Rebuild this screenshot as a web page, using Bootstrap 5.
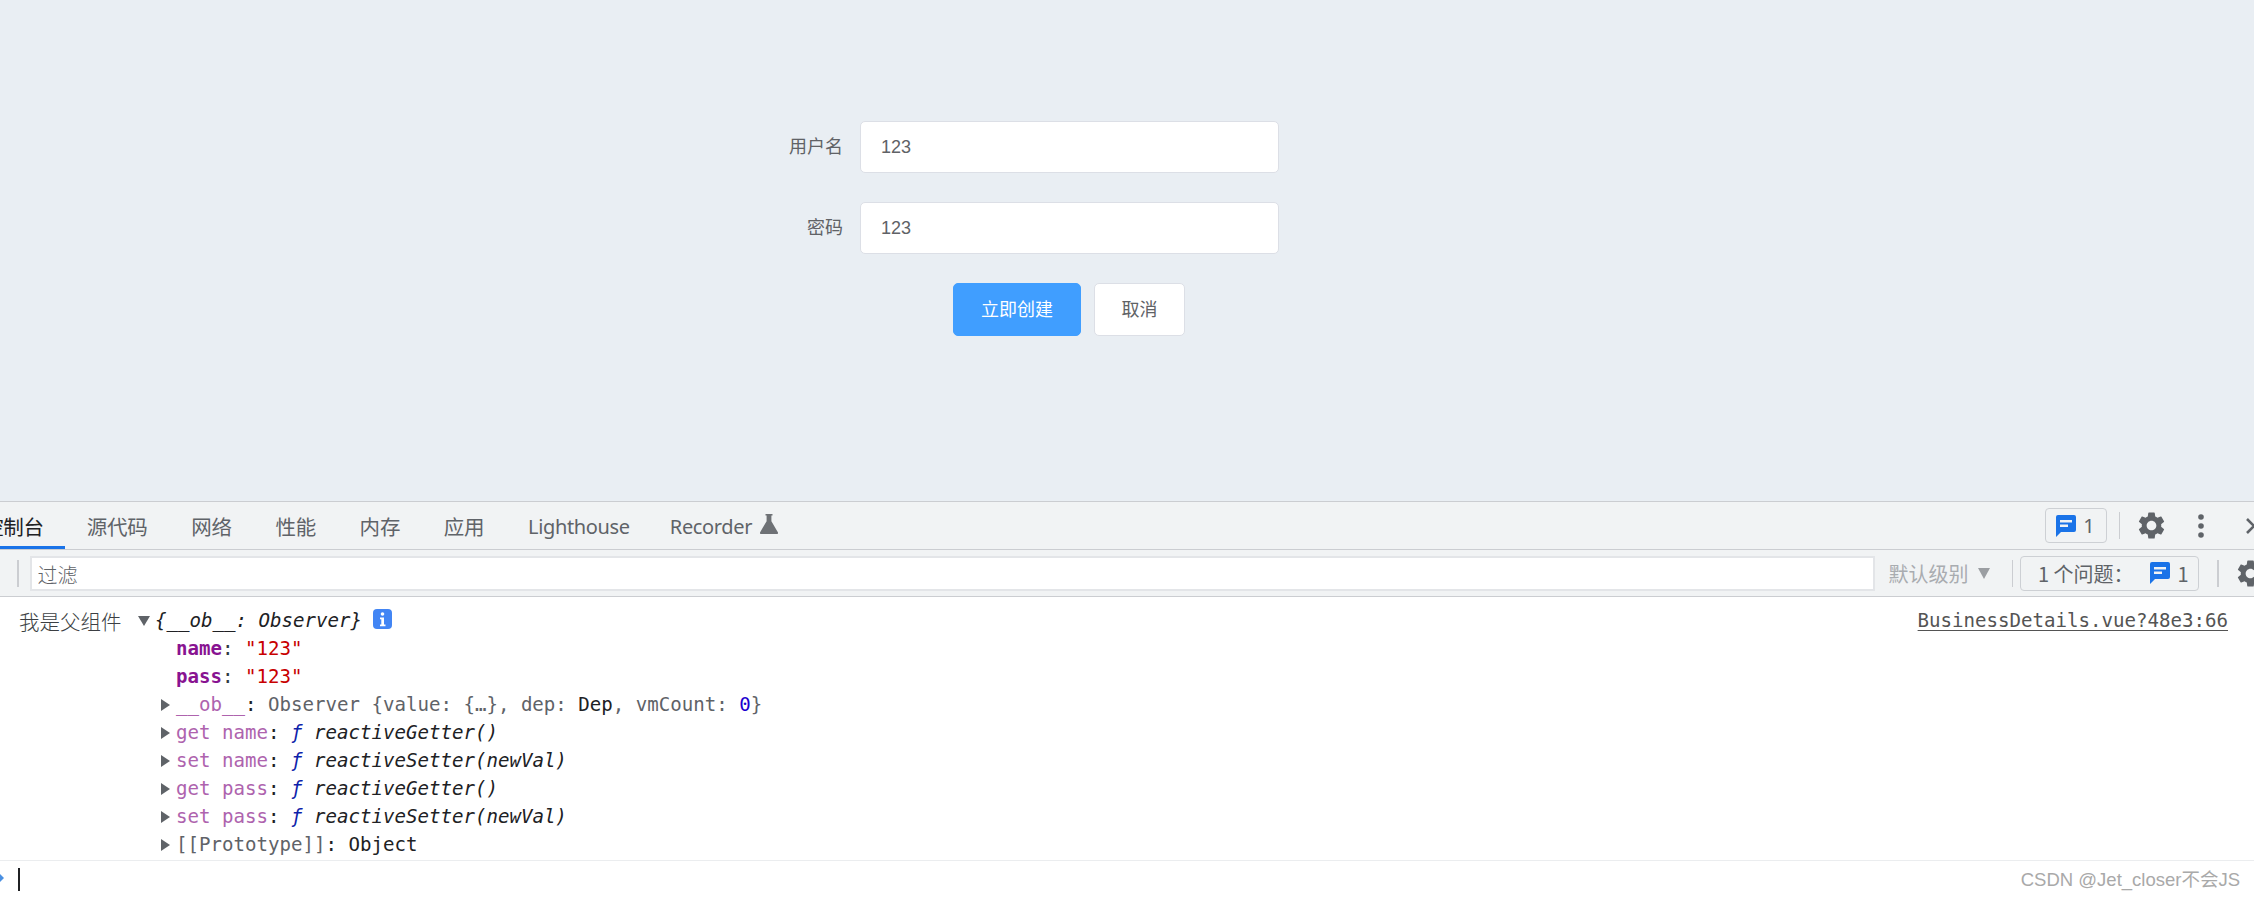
<!DOCTYPE html>
<html lang="zh">
<head>
<meta charset="utf-8">
<title>Form</title>
<link rel="stylesheet" href="https://cdn.jsdelivr.net/npm/bootstrap@5.3.0/dist/css/bootstrap.min.css">
<style>
html,body{height:898px;overflow:hidden;background:#fff}
body{font-family:"Liberation Sans","Noto Sans CJK SC",sans-serif}
.shell{height:898px;width:2254px;overflow:hidden}
.stage{height:501px;background:#e9eef3;padding:121px 0 0 711px;flex:none}
.form-line{height:52px;margin-bottom:29px}
.form-lab{width:132px;text-align:right;font-size:18px;color:#606266;margin-right:17px}
.form-control.fld{width:419px;height:52px;border:1.5px solid #dcdfe6;border-radius:5px;padding:0 20px;font-size:18px;color:#606266;background:#fff;box-shadow:none}
.acts{padding-left:242px;gap:13px;height:53px}
.btn.go,.btn.no{height:53px;border-radius:5px;font-size:18px;padding:0;line-height:1}
.btn.go{width:128px;background:#409eff;border-color:#409eff;color:#fff}
.btn.no{width:91px;background:#fff;border:1.5px solid #dcdfe6;color:#606266}
.dev-tabs{height:49px;background:#f1f3f4;border-top:1.5px solid #cbcdd1;border-bottom:1px solid #cbcdd1;white-space:nowrap;flex:none}
.nav.tabrow{margin-left:-41px;flex-wrap:nowrap;height:100%}
.tabrow .nav-link{height:47px;padding:0 21.800px;font-size:20.500px;line-height:50px;color:#5f6368;font-family:"Noto Sans","Noto Sans CJK SC",sans-serif;font-weight:400;letter-spacing:-.2px}
.tabrow .nav-link.latin{font-size:20px;letter-spacing:-.35px;padding-right:20.500px}
.tabrow .nav-link.latin.rec{padding-left:19.600px}
.tabrow .nav-link.active{color:#202124;box-shadow:inset 0 -3px 0 #1a73e8;padding-left:24px;padding-right:21px}
.flask{width:18px;height:20px;margin-left:8px;vertical-align:0;fill:#6e7175}
.bar-end{height:100%;margin-right:-9px}
.msg-chip{width:62px;height:35px;border:1.5px solid #cdd0d4;border-radius:4px;font-size:20px;color:#5f6368;gap:7px;font-family:"Noto Sans",sans-serif}
.blue-ic{width:20px;height:22px;fill:#1a73e8}
.vsep{width:1.5px;background:#cbcdd1;flex:none}
.vsep.tab-sep{height:27px;margin:0 18px 0 12px}
.gear-ic{width:27px;height:27px;fill:#5f6368;flex:none}
.dots{width:6px;height:24px;margin:0 41px 0 33px;fill:#5f6368;flex:none}
.x-ic{width:18px;height:18px;stroke:#5f6368;stroke-width:2.600;fill:none;flex:none}
.dev-tools{height:47px;background:#f1f3f4;border-bottom:1.5px solid #cbcdd1;flex:none}
.dev-tools .vsep.first{height:27px;margin:0 11px 0 17px}
.filter-in.form-control{width:1845px;height:35px;border:2px solid #e3e5e8;border-radius:0;padding:2px 6px 0;font-size:20px;color:#5f6368;background:#fff;box-shadow:none;font-family:"Noto Sans CJK SC",sans-serif;font-weight:300}
.filter-in::placeholder{color:#5f6368;opacity:1}
.lvl{margin-left:14px;width:107px;font-size:20px;line-height:30px;padding-top:2px;color:#a9acb0;font-family:"Noto Sans CJK SC",sans-serif;white-space:nowrap}
.lvl i{display:inline-block;width:0;height:0;border-left:6.500px solid transparent;border-right:6.500px solid transparent;border-top:11px solid #9b9ea2;margin-left:9px;vertical-align:3px}
.vsep.t2{height:27px;margin:0 7px 0 16px}
.issue-chip{width:179px;height:35px;border:1.5px solid #cdd0d4;border-radius:4px;font-size:20px;color:#5f6368;padding:2px 0 0 17px;font-family:"Noto Sans CJK SC",sans-serif;white-space:nowrap}
.issue-chip .blue-ic{margin-left:16px;margin-right:8px;margin-top:-2px}
.vsep.t3{height:27px;margin:0 18px}
.console-pane{height:263px;padding-top:10px;font-family:"DejaVu Sans Mono","Noto Sans CJK SC",monospace;font-size:19.100px;line-height:28px;color:#303942;white-space:nowrap;flex:none}
.first-line{height:28px}
.who{width:138px;padding-left:19px;font-family:"Noto Sans CJK SC",sans-serif;font-size:20.500px;font-weight:300;color:#3c3f43;flex:none}
.tri-d{width:0;height:0;border-left:6px solid transparent;border-right:6px solid transparent;border-top:10px solid #5f6368;margin-right:5px;flex:none}
.tri-r{width:0;height:0;border-top:6px solid transparent;border-bottom:6px solid transparent;border-left:9px solid #5f6368;margin-right:6px;flex:none}
.sumry{font-style:italic;color:#202124}
.info-ic{width:19px;height:20px;margin-left:11px;margin-top:-4px;flex:none}
.src-link{margin-left:auto;margin-right:26px;color:#545454;text-decoration:underline;text-underline-offset:3px}
.obj-line{height:28px;padding-left:161px}
.leaf{padding-left:176px}
.k-own{color:#881391;font-weight:700}
.k-str{color:#c80000}
.k-dim{color:#ae63ae}
.k-f{color:#0d22aa;font-style:italic}
.fn{font-style:italic;color:#202124}
.gr{color:#5f6368}
.dk{color:#202124}
.nm{color:#1c00cf}
.prompt-line{height:38px;border-top:1.500px solid #ebedef;padding-top:7px;flex:none}
.chev{width:5px;height:12px;margin-right:13px;fill:#4a90e2;flex:none}
.caret-bar{width:1.500px;height:23px;background:#202124}
.wm{margin-left:auto;margin-right:14px;font-size:18.500px;color:#a9a9a9;font-family:"Liberation Sans","Noto Sans CJK SC",sans-serif;line-height:24px}
</style>
</head>
<body>
<svg width="0" height="0" class="d-block">
  <symbol id="gear" viewBox="2 2 20 20"><path d="M19.14 12.94c.04-.3.06-.61.06-.94 0-.32-.02-.64-.07-.94l2.03-1.58c.18-.14.23-.41.12-.61l-1.92-3.32c-.12-.22-.37-.29-.59-.22l-2.39.96c-.5-.38-1.03-.7-1.62-.94l-.36-2.54c-.04-.24-.24-.41-.48-.41h-3.84c-.24 0-.43.17-.47.41l-.36 2.54c-.59.24-1.13.57-1.62.94l-2.39-.96c-.22-.08-.47 0-.59.22L2.74 8.87c-.12.21-.08.47.12.61l2.03 1.58c-.05.3-.09.63-.09.94s.02.64.07.94l-2.03 1.58c-.18.14-.23.41-.12.61l1.92 3.32c.12.22.37.29.59.22l2.39-.96c.5.38 1.03.7 1.62.94l.36 2.54c.05.24.24.41.48.41h3.84c.24 0 .44-.17.47-.41l.36-2.54c.59-.24 1.13-.56 1.62-.94l2.39.96c.22.08.47 0 .59-.22l1.92-3.32c.12-.22.07-.47-.12-.61l-2.01-1.58zM12 15.6c-1.98 0-3.6-1.62-3.6-3.6s1.62-3.6 3.6-3.6 3.6 1.62 3.6 3.6-1.62 3.6-3.6 3.6z"/></symbol>
  <symbol id="bubble" viewBox="0 0 20 22"><path fill-rule="evenodd" d="M2 0h16a2 2 0 0 1 2 2v13a2 2 0 0 1-2 2H5l-5 5V2a2 2 0 0 1 2-2zM4 5v2.4h12V5zM4 9.6V12h8V9.6z"/></symbol>
</svg>
<div class="shell d-flex flex-column">
  <div class="stage">
    <form>
      <div class="form-line d-flex align-items-center">
        <label class="form-lab">用户名</label>
        <input class="form-control fld" value="123">
      </div>
      <div class="form-line d-flex align-items-center">
        <label class="form-lab">密码</label>
        <input class="form-control fld" value="123">
      </div>
      <div class="acts d-flex align-items-center">
        <button type="button" class="btn go">立即创建</button>
        <button type="button" class="btn no">取消</button>
      </div>
    </form>
  </div>
  <div class="dev-tabs d-flex align-items-center justify-content-between">
    <ul class="nav tabrow">
      <li class="nav-item"><a class="nav-link active" href="#">控制台</a></li>
      <li class="nav-item"><a class="nav-link" href="#">源代码</a></li>
      <li class="nav-item"><a class="nav-link" href="#">网络</a></li>
      <li class="nav-item"><a class="nav-link" href="#">性能</a></li>
      <li class="nav-item"><a class="nav-link" href="#">内存</a></li>
      <li class="nav-item"><a class="nav-link" href="#">应用</a></li>
      <li class="nav-item"><a class="nav-link latin" href="#">Lighthouse</a></li>
      <li class="nav-item"><a class="nav-link latin rec" href="#">Recorder<svg class="flask" viewBox="0 0 18 20"><path d="M5.5 0h7v1.6H11.4v5.6L18 18.4a1 1 0 0 1-.9 1.6H.9A1 1 0 0 1 0 18.4L6.600 7.200V1.600H5.500z"/></svg></a></li>
    </ul>
    <div class="bar-end d-flex align-items-center">
      <div class="msg-chip d-flex align-items-center justify-content-center"><svg class="blue-ic"><use href="#bubble"/></svg><span>1</span></div>
      <div class="vsep tab-sep"></div>
      <svg class="gear-ic"><use href="#gear"/></svg>
      <svg class="dots" viewBox="0 0 6 24"><circle cx="3" cy="3" r="2.800"/><circle cx="3" cy="12" r="2.800"/><circle cx="3" cy="21" r="2.800"/></svg>
      <svg class="x-ic" viewBox="0 0 18 18"><path d="M2 2l14 14M16 2L2 16"/></svg>
    </div>
  </div>
  <div class="dev-tools d-flex align-items-center">
    <div class="vsep first"></div>
    <input class="form-control filter-in flex-shrink-0" placeholder="过滤">
    <div class="lvl flex-shrink-0">默认级别<i></i></div>
    <div class="vsep t2"></div>
    <div class="issue-chip d-flex align-items-center flex-shrink-0"><span>1 个问题：</span><svg class="blue-ic flex-shrink-0"><use href="#bubble"/></svg><span>1</span></div>
    <div class="vsep t3"></div>
    <svg class="gear-ic"><use href="#gear"/></svg>
  </div>
  <div class="console-pane">
    <div class="first-line d-flex align-items-center">
      <span class="who">我是父组件</span><span class="tri-d"></span><span class="sumry">{__ob__: Observer}</span>
      <svg class="info-ic" viewBox="0 0 19 20"><rect width="19" height="20" rx="4" fill="#4285f4"/><circle cx="9.500" cy="5" r="1.800" fill="#fff"/><path d="M7 8.500h4v7h1.500v1.700h-5.500v-1.700h1.300v-5.300H7z" fill="#fff"/></svg>
      <a class="src-link" href="#">BusinessDetails.vue?48e3:66</a>
    </div>
    <div class="obj-line leaf"><span class="k-own">name</span>: <span class="k-str">"123"</span></div>
    <div class="obj-line leaf"><span class="k-own">pass</span>: <span class="k-str">"123"</span></div>
    <div class="obj-line d-flex align-items-center"><span class="tri-r"></span><span class="gr"><span class="k-dim">__ob__</span><span class="dk">:</span> Observer {value: {…}, dep: <span class="dk">Dep</span>, vmCount: <span class="nm">0</span>}</span></div>
    <div class="obj-line d-flex align-items-center"><span class="tri-r"></span><span><span class="k-dim">get name</span><span class="dk">:</span> <span class="k-f">ƒ</span> <span class="fn">reactiveGetter()</span></span></div>
    <div class="obj-line d-flex align-items-center"><span class="tri-r"></span><span><span class="k-dim">set name</span><span class="dk">:</span> <span class="k-f">ƒ</span> <span class="fn">reactiveSetter(newVal)</span></span></div>
    <div class="obj-line d-flex align-items-center"><span class="tri-r"></span><span><span class="k-dim">get pass</span><span class="dk">:</span> <span class="k-f">ƒ</span> <span class="fn">reactiveGetter()</span></span></div>
    <div class="obj-line d-flex align-items-center"><span class="tri-r"></span><span><span class="k-dim">set pass</span><span class="dk">:</span> <span class="k-f">ƒ</span> <span class="fn">reactiveSetter(newVal)</span></span></div>
    <div class="obj-line d-flex align-items-center"><span class="tri-r"></span><span><span class="gr">[[Prototype]]</span><span class="dk">: Object</span></span></div>
  </div>
  <div class="prompt-line d-flex align-items-start">
    <svg class="chev mt-1" viewBox="0 0 5 12"><path d="M0 2l4 4-4 4z"/></svg>
    <div class="caret-bar"></div>
    <div class="wm">CSDN @Jet_closer不会JS</div>
  </div>
</div>
</body>
</html>
